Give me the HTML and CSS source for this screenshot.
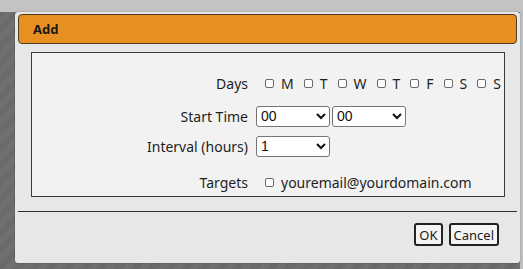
FILE: index.html
```html
<!DOCTYPE html>
<html lang="en">

<head>
    <meta charset="UTF-8">
    <meta name="viewport" content="width=device-width, initial-scale=1.0">
    <title>Add</title>
    <link rel="stylesheet" href="styles.css">
</head>

<body>
    <div class="dialog">
        <div class="dialog_title">Add</div>

        <div class="form_box">
            <label class="form_label">Days</label>
            <div class="form_field days">
                <span class="day"><input type="checkbox" class="chk">M</span>
                <span class="day"><input type="checkbox" class="chk">T</span>
                <span class="day"><input type="checkbox" class="chk">W</span>
                <span class="day"><input type="checkbox" class="chk">T</span>
                <span class="day"><input type="checkbox" class="chk">F</span>
                <span class="day"><input type="checkbox" class="chk">S</span>
                <span class="day"><input type="checkbox" class="chk">S</span>
            </div>

            <label class="form_label">Start Time</label>
            <div class="form_field">
                <select class="sel">
                    <option>00</option>
                </select><select class="sel sel_second">
                    <option>00</option>
                </select>
            </div>

            <label class="form_label">Interval (hours)</label>
            <div class="form_field">
                <select class="sel">
                    <option>1</option>
                </select>
            </div>

            <label class="form_label">Targets</label>
            <div class="form_field targets">
                <span class="day"><input type="checkbox" class="chk">youremail@yourdomain.com</span>
            </div>
        </div>

        <div class="dialog_line"></div>

        <div class="dialog_btns">
            <button class="btn">OK</button>
            <button class="btn">Cancel</button>
        </div>
    </div>
</body>

</html>
```

FILE: styles.css
```css
* {
    margin: 0;
    padding: 0;
    box-sizing: border-box;
}

body {
    width: 523px;
    height: 269px;
    overflow: hidden;
    padding: 12px 0 0 15px;
    font-family: "Noto Sans", "DejaVu Sans", sans-serif;
    font-size: 14px;
    color: #1e1e1e;
    background:
        linear-gradient(#c3c3c3 0, #c3c3c3 12px, transparent 12px),
        linear-gradient(to left, #c0c0c0 0, #c0c0c0 3px, transparent 3px),
        repeating-linear-gradient(135deg, #707070 0, #707070 6px, #6a6a6a 6px, #6a6a6a 12px);
}

.dialog {
    width: 505px;
    height: 251px;
    padding: 2px 3px;
    background-color: #e6e7e8;
    border-radius: 3px;
    box-shadow: 0 0 2px rgba(0, 0, 0, 0.3);
}

.dialog_title {
    height: 30px;
    line-height: 28px;
    padding-left: 14px;
    font-weight: bold;
    font-size: 13px;
    color: #1a1a1a;
    background-color: #e88f21;
    border: 1px solid #4f3d22;
    border-radius: 4px;
}

.form_box {
    display: grid;
    grid-template-columns: 216px 1fr;
    grid-template-rows: 34px 32px 28px 44px;
    column-gap: 8px;
    align-items: center;
    width: 474px;
    height: 145px;
    margin: 8px 0 0 13px;
    padding-top: 13px;
    background-color: #f2f2f2;
    border: 1px solid #3a3a3a;
}

.form_label {
    text-align: right;
}

.form_field {
    display: flex;
    align-items: center;
}

.days,
.targets {
    padding-left: 9px;
}

.day {
    display: flex;
    align-items: center;
    margin-right: 10px;
}

.chk {
    appearance: none;
    width: 9px;
    height: 9px;
    margin-right: 7px;
    border: 1px solid #6a6a6a;
    border-radius: 2px;
    background-color: #fff;
}

.sel {
    width: 74px;
    height: 21px;
    font-family: "Liberation Sans", Arial, sans-serif;
    font-size: 14px;
    color: #111;
    background-color: #fff;
    border: 1px solid #767676;
    border-radius: 3px;
}

.sel_second {
    margin-left: 2px;
}

.dialog_line {
    height: 1px;
    margin-top: 14px;
    background-color: #333;
}

.dialog_btns {
    display: flex;
    justify-content: flex-end;
    gap: 6px;
    margin: 11px 18px 0 0;
}

.btn {
    height: 23px;
    padding: 0 3px;
    font-family: "Noto Sans", "DejaVu Sans", sans-serif;
    font-size: 13px;
    color: #1a1a1a;
    background-color: #f4f4f4;
    border: 2px solid #222;
    border-radius: 3px;
}
```
